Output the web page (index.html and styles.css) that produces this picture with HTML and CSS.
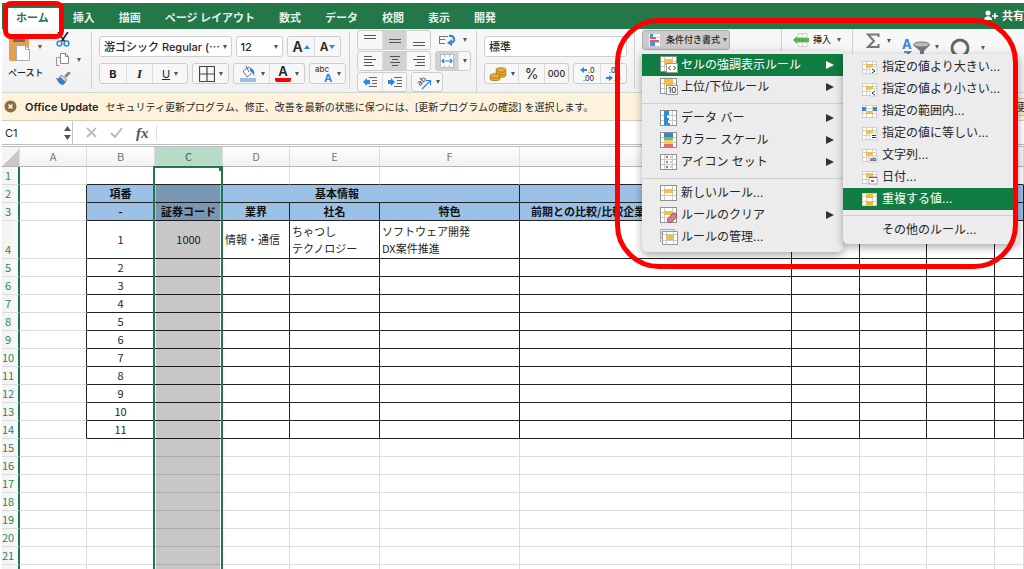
FILE: index.html
```html
<!DOCTYPE html>
<html lang="ja">
<head>
<meta charset="utf-8">
<meta name="viewport" content="width=device-width, initial-scale=1">
<title>Excel</title>
<link rel="stylesheet" href="styles.css">
</head>
<body>
<svg class="defs" aria-hidden="true">
  <defs>
    <g id="grid-icon">
      <rect x="0.5" y="0.5" width="16" height="15" fill="#fff" stroke="#8f8f8f"/>
      <path d="M1 5.500h15M1 10.500h15M4.500 1v14M12.500 1v14" stroke="#c9c9c9" fill="none"/>
    </g>
    <g id="grid-light">
      <rect x="0" y="1" width="14" height="12" fill="#fff"/>
      <path d="M.5 1v12M4.500 1v12M10.500 1v12M14.500 1v12M0 1.500h15M0 4.500h15M0 9.500h15M0 13.500h15" stroke="#cfcfcf" fill="none"/>
    </g>
  </defs>
</svg>
<div class="app">
  <header class="tabs">
    <nav class="tab-list">
      <a class="tab active" href="#home">ホーム</a>
      <a class="tab" href="#insert">挿入</a>
      <a class="tab" href="#draw">描画</a>
      <a class="tab" href="#layout">ページ レイアウト</a>
      <a class="tab" href="#formulas">数式</a>
      <a class="tab" href="#data">データ</a>
      <a class="tab" href="#review">校閲</a>
      <a class="tab" href="#view">表示</a>
      <a class="tab" href="#dev">開発</a>
    </nav>
    <button class="share">
      <svg width="14" height="12" viewBox="0 0 14 12"><circle cx="4" cy="3" r="2.500" fill="#fff"/><path d="M0 10c0-5 8-5 8 0z" fill="#fff"/><path d="M11 3v6M8 6h6" stroke="#fff" stroke-width="1.500"/></svg>
      共有
    </button>
  </header>

  <section class="ribbon" aria-label="リボン">
    <div class="group clipboard">
      <div class="paste">
        <button class="flat paste-icon" aria-label="ペースト">
          <svg width="24" height="30" viewBox="0 0 24 30"><rect x="1" y="3" width="20" height="26" rx="2" fill="#dfa250"/><rect x="5" y="2" width="12" height="8" fill="#6c6c6c"/><path d="M8.500 13.500h9l4 4v11h-13z" fill="#fff" stroke="#aaa"/><path d="M17.500 13.500v4h4" fill="none" stroke="#aaa"/></svg>
          <i class="caret"></i>
        </button>
        <span class="paste-label">ペースト</span>
      </div>
      <div class="clip-tools">
        <button class="flat" aria-label="切り取り"><svg width="14" height="15" viewBox="0 0 14 15"><path d="M2 0l7 10M12 0L5 10" stroke="#222" stroke-width="1.600"/><circle cx="3.500" cy="11.500" r="2.400" fill="none" stroke="#2f86dc" stroke-width="1.500"/><circle cx="10.500" cy="11.500" r="2.400" fill="none" stroke="#2f86dc" stroke-width="1.500"/></svg></button>
        <button class="flat" aria-label="コピー"><svg width="14" height="15" viewBox="0 0 14 15"><path d="M.5 14V5.500h5M.5 13.500h3" fill="none" stroke="#999"/><path d="M4.500 1.500h5l3 3v7h-8z" fill="#fff" stroke="#888"/><path d="M9.500 1.500v3h3" fill="none" stroke="#888"/></svg><i class="caret"></i></button>
        <button class="flat" aria-label="書式のコピー"><svg width="15" height="14" viewBox="0 0 15 14"><path d="M10 4l3-3" stroke="#888" stroke-width="3" stroke-linecap="round"/><path d="M5 3l6 5-2 2-6-4z" fill="#ddd" stroke="#888"/><path d="M0 6c3 1 4 0 4-1l6 5-3 3c-3 0-5-3-7-7z" fill="#3f7cc0"/></svg></button>
      </div>
    </div>

    <div class="group centered font-group">
      <div class="row">
        <label class="picker font-name"><select aria-label="フォント"><option>游ゴシック Regular (⋯</option></select></label>
        <label class="picker font-size"><select aria-label="フォント サイズ"><option>12</option></select></label>
        <div class="cluster">
          <button class="w26" aria-label="拡大"><b class="big-a">A</b><i class="tri up"></i></button>
          <button class="w26" aria-label="縮小"><b class="mid-a">A</b><i class="tri down"></i></button>
        </div>
      </div>
      <div class="row">
        <div class="cluster">
          <button class="w26"><b>B</b></button>
          <button class="w26"><em>I</em></button>
          <button class="w36"><u>U</u><i class="caret"></i></button>
        </div>
        <div class="cluster"><button class="w36" aria-label="罫線"><svg width="16" height="16" viewBox="0 0 16 16"><path d="M.5.5h15v15H.5zM8 1v14M1 8h14" fill="none" stroke="#444" stroke-width="1.200"/></svg><i class="caret"></i></button></div>
        <div class="cluster">
          <button class="w36" aria-label="塗りつぶし"><svg width="18" height="18" viewBox="0 0 18 18"><path d="M4 6l6-4 4 5-6 5z" fill="#fff" stroke="#777"/><path d="M7 1l3 6" stroke="#666"/><path d="M11 3c4 1 5 4 4 8-1-2-1-4-4-5z" fill="#2f7fd6"/><rect x="1" y="13" width="16" height="4" fill="#9bbfe2"/></svg><i class="caret"></i></button>
          <button class="w36" aria-label="文字色"><span class="font-color">A</span><i class="caret"></i></button>
        </div>
        <div class="cluster"><button class="w36" aria-label="ふりがな"><svg class="open" width="18" height="18" viewBox="0 0 18 18"><text x="0" y="7" class="svg-abc">abc</text><text x="9" y="17" class="svg-blue">A</text></svg><i class="caret"></i></button></div>
      </div>
    </div>

    <div class="group align-group">
      <div class="row">
        <div class="cluster">
          <button class="w24" aria-label="上揃え"><svg width="12" height="14"><path d="M0 2.500h12M0 5.500h12" stroke="#555"/></svg></button>
          <button class="w24 on" aria-label="中央揃え"><svg width="12" height="14"><path d="M0 6.500h12M0 9.500h12" stroke="#555"/></svg></button>
          <button class="w24" aria-label="下揃え"><svg width="12" height="14"><path d="M0 9.500h12M0 12.500h12" stroke="#555"/></svg></button>
        </div>
        <button class="flat wrap" aria-label="折り返し"><svg width="17" height="12" viewBox="0 0 17 12"><path d="M0 2.500h9M0 5.500h6M0 9.500h6M.5 2v8" stroke="#777" fill="none"/><path d="M10 2c6-1 7 6 2 7" fill="none" stroke="#2f86dc" stroke-width="2"/><path d="M13 5v7L8 9z" fill="#2f86dc"/></svg><i class="caret"></i></button>
      </div>
      <div class="row">
        <div class="cluster">
          <button class="w24" aria-label="左揃え"><svg width="12" height="12"><path d="M0 1.500h8M0 4.500h12M0 7.500h8M0 10.500h10" stroke="#555"/></svg></button>
          <button class="w24 on" aria-label="左右中央"><svg width="12" height="12"><path d="M1 1.500h10M3 4.500h6M1 7.500h10M3 10.500h6" stroke="#555"/></svg></button>
          <button class="w24" aria-label="右揃え"><svg width="12" height="12"><path d="M4 1.500h8M0 4.500h12M4 7.500h8M2 10.500h10" stroke="#555"/></svg></button>
        </div>
        <div class="cluster">
          <button class="w22 on" aria-label="結合"><svg width="14" height="14" viewBox="0 0 14 14"><rect x=".5" y=".5" width="13" height="13" fill="#fff" stroke="#bbb"/><path d="M4.500 0v3M9.500 0v3M4.500 11v3M9.500 11v3" stroke="#bbb"/><path d="M2 7h10M4 5L2 7l2 2M10 5l2 2-2 2" fill="none" stroke="#2f86dc" stroke-width="1.200"/></svg></button>
          <button class="w10" aria-label="結合オプション"><i class="caret"></i></button>
        </div>
      </div>
      <div class="row">
        <div class="cluster">
          <button class="w24" aria-label="インデント解除"><svg width="14" height="12" viewBox="0 0 14 12"><path d="M0 6l4-4v2h3v4H4v2z" fill="#2f86dc"/><path d="M6 1.500h8M9 4.500h5M9 7.500h5M6 10.500h8" stroke="#666"/></svg></button>
          <button class="w24" aria-label="インデント"><svg width="14" height="12" viewBox="0 0 14 12"><path d="M7 6L3 2v2H0v4h3v2z" fill="#2f86dc"/><path d="M6 1.500h8M9 4.500h5M9 7.500h5M6 10.500h8" stroke="#666"/></svg></button>
        </div>
        <div class="cluster"><button class="w30" aria-label="方向"><svg class="open" width="17" height="16" viewBox="0 0 17 16"><text x="2" y="11" transform="rotate(-45 5 8)" class="svg-abc">ab</text><path d="M7 15l8-8M11 6.500h4.500V11" fill="none" stroke="#2f86dc" stroke-width="1.200"/></svg><i class="caret"></i></button></div>
      </div>
    </div>

    <div class="group centered number-group">
      <label class="picker plain"><select aria-label="表示形式"><option>標準</option></select></label>
      <div class="row">
        <div class="cluster">
          <button class="w32" aria-label="通貨"><svg width="18" height="15" viewBox="0 0 18 15"><g fill="#e9ae35" stroke="#96640f" stroke-width=".7"><ellipse cx="12" cy="9" rx="5" ry="2.200"/><ellipse cx="12" cy="6.500" rx="5" ry="2.200"/><ellipse cx="12" cy="4" rx="5" ry="2.200"/><ellipse cx="6" cy="12.500" rx="5" ry="2.200"/><ellipse cx="6" cy="10" rx="5" ry="2.200"/></g></svg><i class="caret"></i></button>
          <button class="w26 percent">%</button>
          <button class="w24 zeros">000</button>
        </div>
        <div class="cluster">
          <button class="w26" aria-label="小数点以下を増やす"><svg width="17" height="16" viewBox="0 0 17 16"><path d="M1 4l4-3v2h3v2H5v2z" fill="#2f86dc"/><text x="9" y="7" class="svg-num">.0</text><text x="4" y="15" class="svg-num">.00</text></svg></button>
          <button class="w26" aria-label="小数点以下を減らす"><svg width="17" height="16" viewBox="0 0 17 16"><path d="M8 12L4 9v2H1v2h3v2z" fill="#2f86dc"/><text x="4" y="7" class="svg-num">.00</text><text x="9" y="15" class="svg-num">.0</text></svg></button>
        </div>
      </div>
    </div>

    <div class="group style-group">
      <div class="menu-anchor">
        <button class="cond-button" aria-expanded="true">
          <svg width="13" height="12" viewBox="0 0 13 12"><rect width="13" height="12" fill="#fff"/><path d="M.5 0v12M12.500 0v12M0 3.500h13M0 8.500h13" stroke="#c4ccd8"/><path d="M2 0h3v3H2zM2 8h5v4H2z" fill="#4d8fd8"/><path d="M2 3h6v2H2zM2 6h9v2H2z" fill="#e45b5b"/></svg>
          条件付き書式<i class="caret"></i>
        </button>
        <div class="menu" role="menu">
          <button class="item selected" role="menuitem"><svg width="18" height="18" viewBox="0 0 18 18"><use href="#grid-icon"/><path d="M4 3h9v6H4z" fill="#f0c04a"/><rect x="6.500" y="7.500" width="11" height="9" fill="#fff" stroke="#999"/><path d="M10.500 10L8.500 12l2 2M13.500 10l2 2-2 2" fill="none" stroke="#333"/></svg>セルの強調表示ルール<i class="arrow"></i></button>
          <button class="item" role="menuitem"><svg width="18" height="18" viewBox="0 0 18 18"><use href="#grid-icon"/><path d="M4 1h9v6H4z" fill="#f0c04a"/><rect x="6.500" y="7.500" width="11" height="9" fill="#fff" stroke="#999"/><text x="8" y="15" class="svg-ten">10</text></svg>上位/下位ルール<i class="arrow"></i></button>
          <hr>
          <button class="item" role="menuitem"><svg width="18" height="16" viewBox="0 0 18 16"><use href="#grid-icon"/><path d="M4 1h5v4H7v3h2v2H8v3h2v2H4z" fill="#2e8bd6"/></svg>データ バー<i class="arrow"></i></button>
          <button class="item" role="menuitem"><svg width="18" height="16" viewBox="0 0 18 16"><use href="#grid-icon"/><path d="M4 1h9v4H4z" fill="#3388c5"/><path d="M4 5h9v3H4z" fill="#6fb774"/><path d="M4 8h9v4H4z" fill="#f2cf68"/><path d="M4 12h9v3H4z" fill="#e0706d"/></svg>カラー スケール<i class="arrow"></i></button>
          <button class="item" role="menuitem"><svg width="18" height="16" viewBox="0 0 18 16"><use href="#grid-icon"/><g fill="#e0605d"><circle cx="7" cy="3" r="1.200"/><circle cx="7" cy="13" r="1.200"/></g><g fill="#57a95c"><circle cx="7" cy="8" r="1.200"/><circle cx="11" cy="3" r=".8"/></g><path d="M10 8h2M10 13h2" stroke="#999"/></svg>アイコン セット<i class="arrow"></i></button>
          <hr>
          <button class="item" role="menuitem"><svg width="18" height="16" viewBox="0 0 18 16"><use href="#grid-icon"/><path d="M4 4h9v4H4z" fill="#f0c04a"/></svg>新しいルール...</button>
          <button class="item" role="menuitem"><svg width="18" height="17" viewBox="0 0 18 17"><use href="#grid-icon"/><path d="M4 4h9v4H4z" fill="#f0c04a"/><path d="M10 13l4-4" stroke="#8e4659" stroke-width="6" stroke-linecap="round"/><path d="M10 13l4-4" stroke="#d67e95" stroke-width="4.500" stroke-linecap="round"/></svg>ルールのクリア<i class="arrow"></i></button>
          <button class="item" role="menuitem"><svg width="18" height="17" viewBox="0 0 18 17"><path d="M.5 13V.5h14V3M1 4.500h3M1 8.500h2" fill="none" stroke="#aaa"/><rect x="2.500" y="2.500" width="15" height="13" fill="#fff" stroke="#999"/><path d="M3 5.500h14M3 11.500h14M6.500 3v12M13.500 3v12" stroke="#c9c9c9"/><path d="M6 6h8v5H6z" fill="#f0c04a"/></svg>ルールの管理...</button>
        </div>
        <div class="menu submenu" role="menu">
          <button class="item" role="menuitem"><svg width="16" height="15" viewBox="0 0 16 15"><use href="#grid-light"/><path d="M4 4h7v4H4z" fill="#f0c04a"/><rect x="8" y="7" width="7" height="7" fill="#fff" stroke="#ccc"/><path d="M10 9l3 2-3 2" fill="none" stroke="#333"/></svg>指定の値より大きい...</button>
          <button class="item" role="menuitem"><svg width="16" height="15" viewBox="0 0 16 15"><use href="#grid-light"/><path d="M4 4h7v4H4z" fill="#f0c04a"/><rect x="8" y="7" width="7" height="7" fill="#fff" stroke="#ccc"/><path d="M13 9l-3 2 3 2" fill="none" stroke="#333"/></svg>指定の値より小さい...</button>
          <button class="item" role="menuitem"><svg width="16" height="15" viewBox="0 0 16 15"><use href="#grid-light"/><path d="M0 3h4v4H0zM11 3h4v4h-4z" fill="#3b86d1"/><path d="M4 7h7v3H4z" fill="#f0c04a"/></svg>指定の範囲内...</button>
          <button class="item" role="menuitem"><svg width="16" height="15" viewBox="0 0 16 15"><use href="#grid-light"/><path d="M4 4h7v4H4z" fill="#f0c04a"/><rect x="8" y="7" width="7" height="7" fill="#fff" stroke="#ccc"/><path d="M10 9.500h4M10 11.500h4" stroke="#333"/></svg>指定の値に等しい...</button>
          <button class="item" role="menuitem"><svg width="16" height="15" viewBox="0 0 16 15"><use href="#grid-light"/><path d="M4 4h7v4H4z" fill="#f0c04a"/><rect x="7" y="8" width="8" height="6" fill="#fff" stroke="#ccc"/><text x="8" y="13" class="svg-tiny">ab</text></svg>文字列...</button>
          <button class="item" role="menuitem"><svg width="16" height="15" viewBox="0 0 16 15"><use href="#grid-light"/><path d="M4 3h7v4H4z" fill="#f0c04a"/><rect x="7" y="7" width="8" height="7" fill="#fff" stroke="#aaa"/><path d="M7 7.500h8" stroke="#666"/><rect x="9" y="10" width="3" height="2" fill="#dd4c4c"/></svg>日付...</button>
          <button class="item selected" role="menuitem"><svg width="16" height="15" viewBox="0 0 16 15"><use href="#grid-light"/><path d="M4 2h7v4H4zM4 9h7v4H4z" fill="#f0b93a"/></svg>重複する値...</button>
          <hr>
          <button class="item no-icon" role="menuitem">その他のルール...</button>
        </div>
      </div>
    </div>

    <div class="group cells-group">
      <button class="flat insert"><svg width="17" height="14" viewBox="0 0 17 14"><path d="M5 .5h9v13H5zM9.500 0v14M5 4.500h9M5 9.500h9" fill="#fff" stroke="#ccc"/><path d="M0 7l4-4v2h12v4H4v2z" fill="#58b04e"/></svg>挿入<i class="caret"></i></button>
    </div>

    <div class="group edit-group">
      <button class="flat sigma" aria-label="合計"><svg width="14" height="16" viewBox="0 0 14 16"><path d="M12.500 4V1.500H2L8 8l-6 6h10.500v-3" fill="none" stroke="#777" stroke-width="2"/></svg><i class="caret"></i></button>
      <button class="flat low" aria-label="並べ替え"><svg width="29" height="18" viewBox="0 0 29 18"><text x="0" y="11" class="svg-sort">A</text><path d="M2 14h6L3 18" stroke="#666" stroke-width="1.500" fill="none"/><path d="M11 7l7 6v5h4v-5l6-6z" fill="#777"/><ellipse cx="19.500" cy="6.500" rx="8" ry="2.500" fill="#bbb" stroke="#777"/></svg><i class="caret"></i></button>
      <button class="flat low" aria-label="検索"><svg width="22" height="20" viewBox="0 0 22 20"><circle cx="10" cy="10" r="8" fill="none" stroke="#666" stroke-width="3"/><path d="M15 15l4 4" stroke="#666" stroke-width="3"/></svg><i class="caret"></i></button>
    </div>
  </section>

  <section class="notice">
    <button class="flat" aria-label="閉じる"><svg width="13" height="13" viewBox="0 0 13 13"><circle cx="6.500" cy="6.500" r="6" fill="#8d6e43"/><path d="M4.500 4.500l4 4M8.500 4.500l-4 4" stroke="#fff" stroke-width="1.500"/></svg></button>
    <strong>Office Update</strong>
    <p>セキュリティ更新プログラム、修正、改善を最新の状態に保つには、[更新プログラムの確認] を選択します。</p>
    <button class="update">更</button>
  </section>

  <section class="formula">
    <label class="name-box"><input value="C1" aria-label="名前ボックス"><svg width="7" height="16" viewBox="0 0 7 16"><path d="M0 6l3.500-5L7 6zM0 10l3.500 5L7 10z" fill="#555"/></svg></label>
    <button class="flat" aria-label="キャンセル"><svg width="11" height="11"><path d="M1 1l9 9M10 1l-9 9" stroke="#bbb" stroke-width="1.800"/></svg></button>
    <button class="flat" aria-label="入力"><svg width="13" height="11"><path d="M1 6l4 4 7-9" fill="none" stroke="#bbb" stroke-width="2"/></svg></button>
    <button class="flat fx">fx</button>
    <input class="formula-input" aria-label="数式バー">
  </section>

  <main class="sheet">
    <table>
      <colgroup><col class="c-head"><col class="c67"><col class="c68"><col class="c68"><col class="c67"><col class="c-e"><col class="c-f"><col class="c-g"><col class="c68"><col class="c67"><col class="c68"><col></colgroup>
      <thead><tr><th class="corner"></th><th>A</th><th>B</th><th class="col-on">C</th><th>D</th><th>E</th><th>F</th><th>G</th><th>H</th><th>I</th><th>J</th><th>K</th></tr></thead>
      <tbody>
        <tr class="first"><th>1</th><td></td><td></td><td></td><td></td><td></td><td></td><td></td><td></td><td></td><td></td><td></td></tr>
        <tr class="boxed title"><th>2</th><td></td><td>項番</td><td colspan="4">基本情報</td><td colspan="5"></td></tr>
        <tr class="boxed title"><th>3</th><td></td><td>-</td><td>証券コード</td><td>業界</td><td>社名</td><td>特色</td><td class="left">前期との比較/比較企業</td><td></td><td></td><td></td><td></td></tr>
        <tr class="boxed tall"><th>4</th><td></td><td>1</td><td>1000</td><td class="text">情報・通信</td><td class="text">ちゃつし<br>テクノロジー</td><td class="text">ソフトウェア開発<br>DX案件推進</td><td></td><td></td><td></td><td></td><td></td></tr>
        <tr class="boxed"><th>5</th><td></td><td>2</td><td></td><td></td><td></td><td></td><td></td><td></td><td></td><td></td><td></td></tr>
        <tr class="boxed"><th>6</th><td></td><td>3</td><td></td><td></td><td></td><td></td><td></td><td></td><td></td><td></td><td></td></tr>
        <tr class="boxed"><th>7</th><td></td><td>4</td><td></td><td></td><td></td><td></td><td></td><td></td><td></td><td></td><td></td></tr>
        <tr class="boxed"><th>8</th><td></td><td>5</td><td></td><td></td><td></td><td></td><td></td><td></td><td></td><td></td><td></td></tr>
        <tr class="boxed"><th>9</th><td></td><td>6</td><td></td><td></td><td></td><td></td><td></td><td></td><td></td><td></td><td></td></tr>
        <tr class="boxed"><th>10</th><td></td><td>7</td><td></td><td></td><td></td><td></td><td></td><td></td><td></td><td></td><td></td></tr>
        <tr class="boxed"><th>11</th><td></td><td>8</td><td></td><td></td><td></td><td></td><td></td><td></td><td></td><td></td><td></td></tr>
        <tr class="boxed"><th>12</th><td></td><td>9</td><td></td><td></td><td></td><td></td><td></td><td></td><td></td><td></td><td></td></tr>
        <tr class="boxed"><th>13</th><td></td><td>10</td><td></td><td></td><td></td><td></td><td></td><td></td><td></td><td></td><td></td></tr>
        <tr class="boxed"><th>14</th><td></td><td>11</td><td></td><td></td><td></td><td></td><td></td><td></td><td></td><td></td><td></td></tr>
        <tr><th>15</th><td></td><td></td><td></td><td></td><td></td><td></td><td></td><td></td><td></td><td></td><td></td></tr>
        <tr><th>16</th><td></td><td></td><td></td><td></td><td></td><td></td><td></td><td></td><td></td><td></td><td></td></tr>
        <tr><th>17</th><td></td><td></td><td></td><td></td><td></td><td></td><td></td><td></td><td></td><td></td><td></td></tr>
        <tr><th>18</th><td></td><td></td><td></td><td></td><td></td><td></td><td></td><td></td><td></td><td></td><td></td></tr>
        <tr><th>19</th><td></td><td></td><td></td><td></td><td></td><td></td><td></td><td></td><td></td><td></td><td></td></tr>
        <tr><th>20</th><td></td><td></td><td></td><td></td><td></td><td></td><td></td><td></td><td></td><td></td><td></td></tr>
        <tr><th>21</th><td></td><td></td><td></td><td></td><td></td><td></td><td></td><td></td><td></td><td></td><td></td></tr>
        <tr><th></th><td></td><td></td><td></td><td></td><td></td><td></td><td></td><td></td><td></td><td></td><td></td></tr>
      </tbody>
    </table>
    <div class="selection"><div class="shade"></div><i class="handle"></i></div>
  </main>

  <div class="mark mark-tab"></div>
  <div class="mark mark-menu"></div>
</div>
</body>
</html>
```
FILE: styles.css
```css
* { box-sizing: border-box; }
body {
  margin: 0;
  background: #fff;
  color: #262626;
  font: 11px/16px Inter, "Noto Sans CJK JP", sans-serif;
}
button, input, select { font: inherit; color: inherit; margin: 0; padding: 0; border: 0; background: none; }
svg { display: block; flex: none; }
.open { overflow: visible; }
.defs { position: absolute; width: 0; height: 0; }
.app {
  position: relative;
  display: flex;
  flex-direction: column;
  height: 100vh;
  padding: 3px 0 0 2px;
  overflow: hidden;
}

/* tabs */
.tabs { display: flex; justify-content: space-between; height: 26px; flex: none; background: #237749; color: #e6f1ea; }
.tab-list { display: flex; padding: 5px 0 0 6px; }
.tab { padding: 2px 12px 0; color: inherit; text-decoration: none; font-weight: bold; white-space: nowrap; }
.tab:first-child { padding: 2px 12px 0 8px; }
.tab.active { background: #fff; color: #237749; }
.share { display: flex; align-items: center; gap: 4px; font-weight: bold; color: #fff; }

/* ribbon */
.ribbon { display: flex; flex: none; height: 64px; background: linear-gradient(#f8f8f8, #f1f1f1); border-bottom: 1px solid #d4d4d4; }
.group { display: flex; flex: none; position: relative; padding: 0 8px 0 7px; }
.group:not(:last-child) { border-right: 1px solid #d2d2d2; margin: 3px 0; }
.flat { display: flex; align-items: center; gap: 6px; }
.caret { flex: none; border: solid transparent; border-width: 4px 2px 0; border-top-color: #555; width: 4px; height: 4px; }
.clipboard { width: 90px; gap: 10px; padding: 0 6px; }
.paste { display: flex; flex-direction: column; width: 38px; gap: 3px; }
.paste-label { font-size: 9px; font-weight: 500; white-space: nowrap; }
.clip-tools { display: flex; flex-direction: column; gap: 5px; }
.clip-tools .flat { gap: 7px; }
.centered, .align-group { flex-direction: column; }
.centered { gap: 6px; padding-top: 4px; }
.font-group { width: 258px; }
.ribbon .align-group { width: 127px; gap: 1px; margin: 1px 0 0; }
.align-group .cluster { height: 20px; }
.align-group .cluster button { height: 18px; }
.number-group { width: 158px; }
.row { display: flex; gap: 4px; }
.cluster, .picker { display: flex; height: 21px; border: 1px solid #cdcdcd; border-radius: 3px; background: #f7f7f7; }
.cluster button { display: flex; align-items: center; justify-content: center; gap: 4px; height: 19px; }
.cluster button + button { border-left: 1px solid #dcdcdc; }
.cluster .on { background: #d2d2d2; }
.w10 { width: 12px; } .w22 { width: 22px; } .w24 { width: 24px; } .w26 { width: 26px; }
.w30 { width: 30px; } .w32 { width: 33px; } .w36 { width: 35px; }
.picker { position: relative; background: #fff; }
.picker select { width: 100%; padding: 0 4px; appearance: none; font-weight: 500; overflow: hidden; }
.font-name { width: 134px; }
.font-size { width: 48px; }
.plain { width: 143px; }
.picker:not(.plain)::after { content: ""; position: absolute; right: 4px; top: 8px; border: solid transparent; border-width: 4px 2px 0; border-top-color: #555; }
.big-a { font-size: 14px; font-weight: 600; }
.mid-a { font-size: 12px; font-weight: 600; }
.cluster .w26 .tri { margin-left: -3px; }
.tri { border: 3px solid transparent; }
.tri.up { border-top: 0; border-bottom: 4px solid #2f86dc; }
.tri.down { border-bottom: 0; border-top: 4px solid #2f86dc; }
.cluster em { font: italic bold 13px/16px "Liberation Serif", serif; }
.font-color { width: 16px; font-size: 13px; line-height: 13px; font-weight: 600; border-bottom: 4px solid #f00; border-radius: 0 0 2px 2px; }
.wrap { margin-left: 4px; gap: 7px; }
.percent { font-size: 14px; }
.zeros { font-size: 9px; font-weight: 500; }
.svg-abc { font: 500 8px Inter, sans-serif; fill: #444; }
.svg-blue { font: bold 11px Inter, sans-serif; fill: #2f86dc; }
.svg-num { font: 500 7px Inter, sans-serif; fill: #333; }
.svg-ten { font: 500 8px Inter, sans-serif; fill: #333; }
.svg-tiny { font: bold 5px Inter, sans-serif; fill: #333; }
.svg-sort { font: bold 13px Inter, sans-serif; fill: #2f86dc; }

.ribbon .style-group, .ribbon .cells-group { margin: 0; }
.style-group { width: 147px; padding-top: 1px; }
.menu-anchor { position: relative; }
.cond-button { display: flex; align-items: center; gap: 5px; height: 20px; width: 88px; padding: 0 5px; border: 1px solid #b0b0b0; border-radius: 3px; background: #cbcbcb; font-size: 9px; font-weight: 500; white-space: nowrap; }
.cond-button .caret { margin-left: -2px; }
.cells-group { width: 71px; padding: 4px 0 0 11px; align-items: flex-start; }
.insert { height: 14px; gap: 3px; font-size: 9px; font-weight: 500; white-space: nowrap; }
.insert .caret { margin-left: 3px; }
.edit-group { padding: 4px 0 0 13px; gap: 11px; align-items: flex-start; }
.low { padding-top: 5px; gap: 4px; }
.low:last-child { gap: 9px; }
.sigma { gap: 7px; }

/* menus */
.menu {
  position: absolute;
  z-index: 5;
  top: 21px;
  left: 0;
  width: 201px;
  padding: 3px 0 4px;
  background: #ececec;
  border-radius: 0 0 5px 5px;
  box-shadow: 0 3px 9px rgba(0, 0, 0, .35);
}
.submenu { z-index: 6; top: 24px; left: 201px; width: 175px; padding: 2px 0 3px; }
.item { display: flex; align-items: center; gap: 3px; width: 100%; height: 22px; padding: 0 9px 0 18px; font-size: 12px; white-space: nowrap; }
.submenu .item { gap: 4px; padding: 0 0 0 19px; }
.submenu .no-icon { padding-left: 39px; }
.item.selected { background: #107c41; color: #fff; }
.arrow { margin-left: auto; border: solid transparent; border-width: 4px 0 4px 8px; border-left-color: #333; }
.selected .arrow { border-left-color: #fff; }
.menu hr { height: 1px; margin: 5px 0 3px; border: 0; background: #cfcfcf; }

/* notice and formula bar */
.notice { display: flex; flex: none; align-items: center; height: 28px; padding: 0 0 0 2px; background: #fdf3dd; border-bottom: 1px solid #d8cfba; white-space: nowrap; overflow: hidden; }
.notice strong { margin: 0 7px 0 8px; font-weight: 600; }
.notice p { margin: 0; font-size: 10px; }
.update { flex: none; width: 7px; height: 18px; margin-left: auto; overflow: hidden; border: solid #c9bfa6; border-width: 1px 0; background: #f6ecd2; font-size: 10px; text-align: left; }
.formula { display: flex; flex: none; align-items: center; height: 26px; border-bottom: 3px double #bdbdbd; }
.name-box { display: flex; align-items: center; width: 71px; height: 23px; padding: 0 3px; border-right: 1px solid #c4c4c4; }
.name-box input { width: 56px; margin-right: 3px; }
.formula .flat { margin-left: 13px; }
.formula .fx { font: italic bold 15px/16px "Liberation Serif", serif; color: #555; }
.formula-input { flex: 1; min-width: 0; margin-left: 7px; border-left: 1px solid #ddd; }

/* sheet */
.sheet { position: relative; flex: 1; overflow: hidden; font-family: "Noto Sans CJK JP", sans-serif; }
table { width: 100%; table-layout: fixed; border-collapse: separate; border-spacing: 0; }
.c-head { width: 18px; } .c67 { width: 67px; } .c68 { width: 68px; }
.c-e { width: 90px; } .c-f { width: 140px; } .c-g { width: 272px; }
th, td { height: 18px; padding: 0; border: solid #dcdcdc; border-width: 0 1px 1px 0; font-size: 11px; line-height: 17px; text-align: center; white-space: nowrap; overflow: hidden; }
thead th { height: 20px; background: linear-gradient(#fdfdfd, #f2f2f2); border-bottom-color: #b5b5b5; color: #777; font-weight: normal; }
thead .col-on { background: #b8dbc7; color: #237749; border-bottom-color: #237749; }
thead .corner { background: linear-gradient(135deg, #f5f5f5 55%, #c8c8c8 55%); }
tbody th { padding-right: 4px; background: linear-gradient(90deg, #f2f2f2, #fafafa); color: #2f8556; border-right: 2px solid #237749; font-weight: normal; vertical-align: bottom; }
.boxed td { border-color: #222; }
.boxed td:nth-child(2) { border-bottom-color: #dcdcdc; }
.first td:nth-child(n+3) { border-bottom-color: #222; }
.title td { font-weight: bold; color: #111; }
.title td:nth-child(n+3) { background: #9bc1e6; }
.title .left { text-align: left; padding-left: 11px; }
.tall td { height: 38px; }
.tall .text { text-align: left; padding-left: 2px; }
.selection { position: absolute; left: 151px; top: 19px; bottom: 0; width: 70px; border: 2px solid #237749; border-bottom: 0; }
.shade { position: absolute; inset: 17px 1px 0; background: rgba(0, 0, 0, .22); }
.handle { position: absolute; right: -2px; top: -1px; width: 4px; height: 4px; background: #237749; }

/* red highlight frames */
.mark { position: absolute; z-index: 10; border: 5px solid #fe0000; pointer-events: none; }
.mark-tab { left: 3px; top: 1px; width: 61px; height: 38px; border-radius: 8px; }
.mark-menu { left: 615px; right: 6px; top: 18px; height: 251px; border-radius: 44px; }
```
